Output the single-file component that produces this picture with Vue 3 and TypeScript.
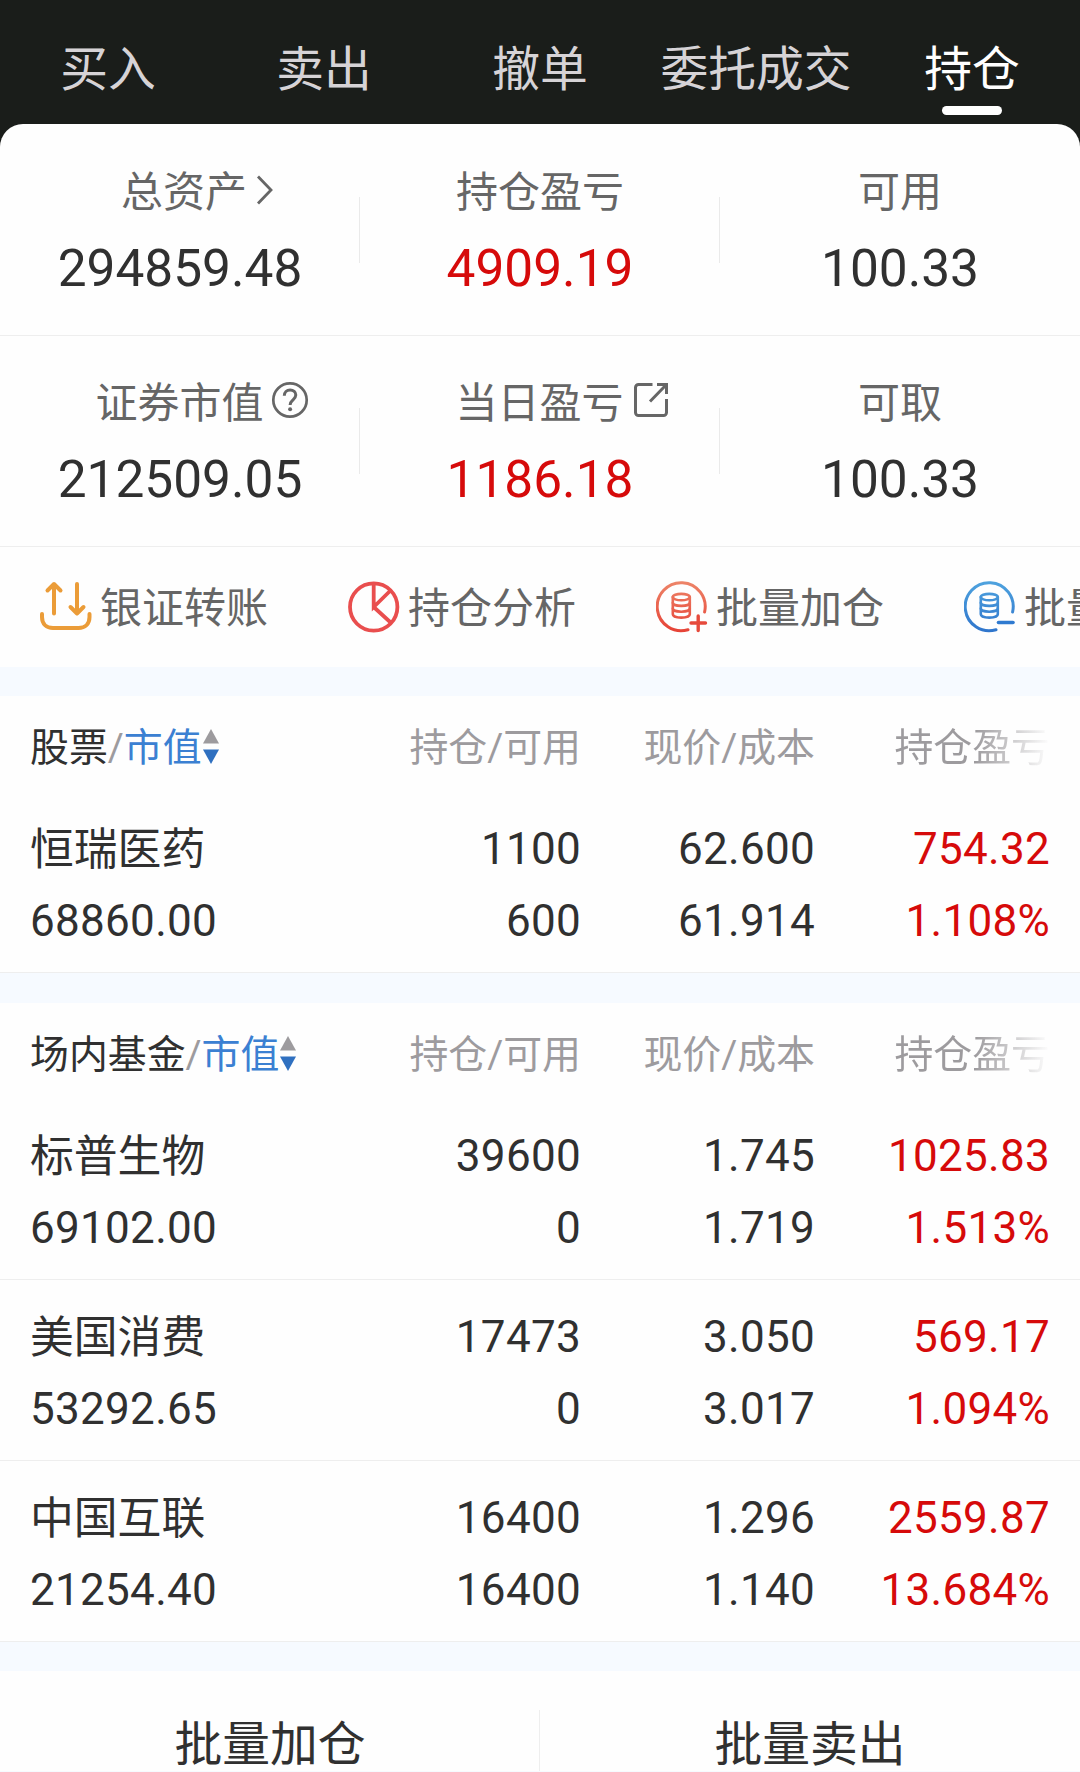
<script setup lang="ts">
interface Cell { top: string; bottom: string }
interface Holding { name: string; value: string; amount: Cell; price: Cell; profit: Cell }
interface Group { title: string; rows: Holding[] }
interface Stat { label: string; value: string; up?: boolean; icon?: 'chevron' | 'help' | 'share' }

const tabs = ['买入', '卖出', '撤单', '委托成交', '持仓']
const activeTab = '持仓'

const summary: Stat[][] = [
  [
    { label: '总资产', value: '294859.48', icon: 'chevron' },
    { label: '持仓盈亏', value: '4909.19', up: true },
    { label: '可用', value: '100.33' },
  ],
  [
    { label: '证券市值', value: '212509.05', icon: 'help' },
    { label: '当日盈亏', value: '1186.18', up: true, icon: 'share' },
    { label: '可取', value: '100.33' },
  ],
]

const actions = [
  { icon: 'transfer', label: '银证转账' },
  { icon: 'pie', label: '持仓分析' },
  { icon: 'add', label: '批量加仓' },
  { icon: 'reduce', label: '批量' },
]

const columns = ['持仓/可用', '现价/成本', '持仓盈亏']

const groups: Group[] = [
  {
    title: '股票',
    rows: [
      { name: '恒瑞医药', value: '68860.00', amount: { top: '1100', bottom: '600' }, price: { top: '62.600', bottom: '61.914' }, profit: { top: '754.32', bottom: '1.108%' } },
    ],
  },
  {
    title: '场内基金',
    rows: [
      { name: '标普生物', value: '69102.00', amount: { top: '39600', bottom: '0' }, price: { top: '1.745', bottom: '1.719' }, profit: { top: '1025.83', bottom: '1.513%' } },
      { name: '美国消费', value: '53292.65', amount: { top: '17473', bottom: '0' }, price: { top: '3.050', bottom: '3.017' }, profit: { top: '569.17', bottom: '1.094%' } },
      { name: '中国互联', value: '21254.40', amount: { top: '16400', bottom: '16400' }, price: { top: '1.296', bottom: '1.140' }, profit: { top: '2559.87', bottom: '13.684%' } },
    ],
  },
]

const footer = ['批量加仓', '批量卖出']
</script>

<template>
  <div class="page">
    <nav class="tabs">
      <div v-for="t in tabs" :key="t" class="tab" :class="{ active: t === activeTab }">
        <span>{{ t }}</span>
        <i class="bar"></i>
      </div>
    </nav>

    <section class="card">
      <div v-for="(line, i) in summary" :key="i" class="stats">
        <div v-for="s in line" :key="s.label" class="stat">
          <div class="stat-label">
            <span>{{ s.label }}</span>
            <svg v-if="s.icon === 'chevron'" class="chevron" width="22" height="34" viewBox="0 0 22 34" fill="none" stroke="#666" stroke-width="2.8">
              <path d="M5 3.5 18 17 5 30.5" />
            </svg>
            <svg v-else-if="s.icon === 'help'" class="help" width="38" height="38" viewBox="0 0 38 38" fill="none" stroke="#666" stroke-width="2.7">
              <circle cx="19" cy="19" r="16.7" />
              <path d="M13.3 14.8c0-3.7 2.5-5.9 5.8-5.9 3.3 0 5.7 2.1 5.7 5.2 0 2.6-1.6 3.8-3.3 5.3-1.6 1.4-2.4 2.3-2.4 4.6" stroke-width="3" />
              <circle cx="19.1" cy="28.3" r="2" fill="#666" stroke="none" />
            </svg>
            <svg v-else-if="s.icon === 'share'" class="share" width="36" height="36" viewBox="0 0 36 36" fill="none" stroke="#666" stroke-width="3">
              <path d="M19.5 2.5H5.5a3 3 0 0 0-3 3v25a3 3 0 0 0 3 3h25a3 3 0 0 0 3-3V17" />
              <path d="M24 2.5h9.5V12M33 3 17 19.5" />
            </svg>
          </div>
          <div class="stat-value" :class="{ up: s.up }">{{ s.value }}</div>
        </div>
      </div>

      <div class="actions">
        <div v-for="a in actions" :key="a.icon" class="action">
          <svg v-if="a.icon === 'transfer'" width="52" height="54" viewBox="0 0 52 54" fill="none" stroke="#eb9c38" stroke-width="4" stroke-linecap="round" stroke-linejoin="round">
            <path d="M14 33.5V4M7.5 10.5 14 4 20.5 10.5" />
            <path d="M37 4v29.5M30.5 27 37 33.5 43.5 27" />
            <path d="M2 34v3c0 7 4.5 11 11 11h25.5c6.5 0 11-4 11-11v-3" />
          </svg>
          <svg v-else-if="a.icon === 'pie'" width="52" height="54" viewBox="0 0 52 54" fill="none" stroke="#e94e4e" stroke-width="3.8">
            <circle cx="25.7" cy="27" r="23.7" />
            <path d="M25.7 3v24L42.5 10.5M25.7 27l17.5 16" />
          </svg>
          <svg v-else width="52" height="54" viewBox="0 0 52 54" fill="none" :stroke="a.icon === 'add' ? 'url(#red)' : 'url(#blue)'" stroke-width="3" stroke-linecap="round">
            <defs>
              <linearGradient id="red" gradientUnits="userSpaceOnUse" x1="0" y1="2" x2="0" y2="52">
                <stop offset="0" stop-color="#ed8468" />
                <stop offset="1" stop-color="#e64236" />
              </linearGradient>
              <linearGradient id="blue" gradientUnits="userSpaceOnUse" x1="0" y1="2" x2="0" y2="52">
                <stop offset="0" stop-color="#4ea2de" />
                <stop offset="1" stop-color="#2f75cc" />
              </linearGradient>
            </defs>
            <path d="M48.6 32A24 24 0 1 0 32 49.7" />
            <g stroke-width="2.6">
              <ellipse cx="25.3" cy="17.1" rx="8.5" ry="3.2" />
              <path d="M16.8 17.1v17.2c0 1.9 3.8 3.3 8.5 3.3s8.5-1.4 8.5-3.3v-17.2" />
              <path d="M16.8 22.7c0 1.9 3.8 3.2 8.5 3.2s8.5-1.3 8.5-3.2M16.8 28.5c0 1.9 3.8 3.2 8.5 3.2s8.5-1.3 8.5-3.2" />
            </g>
            <path v-if="a.icon === 'add'" d="M35 43h14.5M42.2 36v14.5" stroke="#e64a3c" stroke-width="3.4" />
            <path v-else d="M34.5 42.5h14.5" stroke="#2f7ad0" stroke-width="3.6" />
          </svg>
          <span class="action-text">{{ a.label }}</span>
        </div>
      </div>
    </section>

    <section v-for="g in groups" :key="g.title" class="group">
      <header class="grid head">
        <div class="title">
          <span class="name">{{ g.title }}</span><span>/</span><span class="sort">市值</span>
          <svg width="16" height="36" viewBox="0 0 16 36">
            <path d="M8 0 16 14.5H0Z" fill="#9d9b9e" />
            <path d="M0 20.5H16L8 35Z" fill="#2f70c0" />
          </svg>
        </div>
        <div v-for="c in columns" :key="c" class="num">{{ c }}</div>
      </header>
      <div v-for="r in g.rows" :key="r.name" class="grid row">
        <div><p class="holding">{{ r.name }}</p><p>{{ r.value }}</p></div>
        <div class="num"><p>{{ r.amount.top }}</p><p>{{ r.amount.bottom }}</p></div>
        <div class="num"><p>{{ r.price.top }}</p><p>{{ r.price.bottom }}</p></div>
        <div class="num up"><p>{{ r.profit.top }}</p><p>{{ r.profit.bottom }}</p></div>
      </div>
    </section>

    <footer class="footer">
      <div v-for="f in footer" :key="f" class="foot-btn">{{ f }}</div>
    </footer>
  </div>
</template>

<style>
body {
  margin: 0;
  overflow: hidden;
}
</style>

<style scoped>
.page {
  width: 1080px;
  height: 1772px;
  overflow: hidden;
  background: #f6faff;
  color: #303030;
  font-family: Roboto, "Noto Sans CJK SC", sans-serif;
}
.tabs {
  display: flex;
  height: 154px;
  background: #1a1d1a;
}
.tab {
  flex: 1;
  display: flex;
  flex-direction: column;
  align-items: center;
  padding-top: 38px;
  height: 116px;
  font-size: 47.8px;
  line-height: 64px;
  color: #d6d3d6;
}
.bar {
  width: 60px;
  height: 9px;
  margin-top: 4px;
  border-radius: 5px;
}
.active {
  color: #fff;
}
.active .bar {
  background: #fff;
}
.card {
  position: relative;
  margin-top: -30px;
  height: 543px;
  border-radius: 23px 23px 0 0;
  background: #fefefe;
}
.stats {
  display: flex;
  box-sizing: border-box;
  height: 211px;
  padding-top: 36px;
  border-bottom: 1px solid #eee;
}
.stats:first-child {
  height: 212px;
  padding-top: 37px;
}
.stat {
  flex: 1;
  height: 170px;
  background: linear-gradient(#eaeaea, #eaeaea) right 36px / 1px 66px no-repeat;
}
.stat:last-child {
  background: none;
}
.stat-label {
  display: flex;
  justify-content: center;
  align-items: center;
  height: 63px;
  font-size: 42px;
  line-height: 60px;
  color: #666;
}
.chevron {
  margin: -5px -36px 0 6px;
}
.help {
  margin: -8px -44px 0 7px;
}
.share {
  margin: -8px -44px 0 9px;
}
.stat-value {
  margin-top: 15px;
  font-size: 51.4px;
  line-height: 60px;
  text-align: center;
}
.up {
  color: #d60a0a;
}
.actions {
  display: flex;
  gap: 79px;
  height: 120px;
  padding-left: 40px;
  overflow: hidden;
}
.action {
  flex: none;
  display: flex;
  align-items: center;
  gap: 8px;
  width: 229px;
  font-size: 42px;
  line-height: 60px;
  color: #666;
  white-space: nowrap;
}
.action svg {
  flex: none;
}
.action-text {
  padding-top: 4px;
}
.group {
  margin-top: 29px;
  background: #fefefe;
}
.group + .group {
  margin-top: 30px;
}
.grid {
  display: grid;
  grid-template-columns: 317px 234px 234px 235px;
  padding: 0 30px;
}
.num {
  text-align: right;
}
.head {
  box-sizing: border-box;
  height: 96px;
  padding-top: 7px;
  align-items: center;
  font-size: 38.9px;
  line-height: 56px;
  color: #9d9b9e;
  white-space: nowrap;
}
.head .num:last-child {
  background: linear-gradient(90deg, #9d9b9e 68%, rgba(157, 155, 158, 0) 100%);
  background-clip: text;
  -webkit-background-clip: text;
  color: transparent;
}
.title {
  display: flex;
  align-items: center;
}
.title svg {
  margin: -1px 0 0 1px;
}
.name {
  color: #303030;
}
.sort {
  color: #3b80d2;
}
.row {
  box-sizing: border-box;
  height: 181px;
  padding-top: 21px;
  border-bottom: 1px solid #eee;
  font-size: 44px;
  line-height: 72px;
  letter-spacing: 0.3px;
}
.row p {
  margin: 0;
}
.row .holding {
  box-sizing: border-box;
  height: 72px;
  padding-top: 1px;
  font-size: 43.8px;
  letter-spacing: 0;
}
.footer {
  display: flex;
  height: 100px;
  margin-top: 29px;
  background: #fefefe;
}
.foot-btn {
  flex: 1;
  padding-top: 42px;
  height: 58px;
  font-size: 47.8px;
  line-height: 64px;
  text-align: center;
}
.foot-btn:first-child {
  background: linear-gradient(#eee, #eee) right 39px / 1px 61px no-repeat;
}
</style>
